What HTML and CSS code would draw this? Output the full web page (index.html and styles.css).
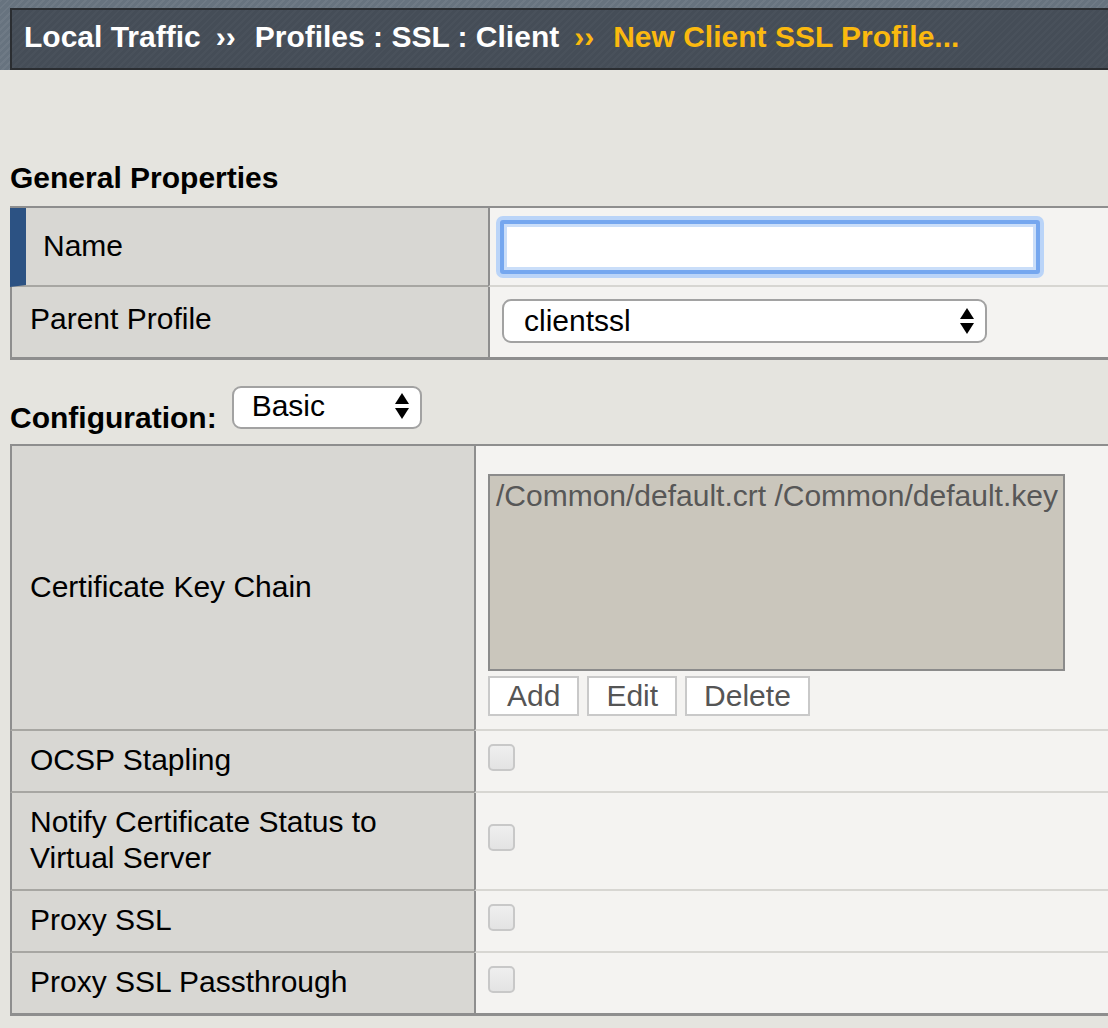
FILE: index.html
```html
<!DOCTYPE html>
<html lang="en">
<head>
<meta charset="utf-8">
<title>New Client SSL Profile</title>
<link rel="stylesheet" href="styles.css">
</head>
<body>
<div class="topbar">
  <div class="crumbs">
    <span class="crumb">Local Traffic</span><span class="sep">››</span><span class="crumb">Profiles : SSL : Client</span><span class="sep current">››</span><span class="crumb current">New Client SSL Profile...</span>
  </div>
</div>
<main class="page">
  <h2 class="section-title first">General Properties</h2>
  <div class="props props-general">
    <div class="label required"><span>Name</span></div>
    <div class="value"><input class="text-input" type="text" value=""></div>
    <div class="label last"><span>Parent Profile</span></div>
    <div class="value last">
      <div class="select select-parent"><span>clientssl</span>
        <svg class="arrows" width="14" height="26" viewBox="0 0 14 26"><polygon points="7,0 14,11 0,11" fill="#000"/><polygon points="0,15 14,15 7,26" fill="#000"/></svg>
      </div>
    </div>
  </div>

  <div class="config-head">
    <h2 class="section-title">Configuration:</h2>
    <div class="select select-config"><span>Basic</span>
      <svg class="arrows" width="14" height="26" viewBox="0 0 14 26"><polygon points="7,0 14,11 0,11" fill="#000"/><polygon points="0,15 14,15 7,26" fill="#000"/></svg>
    </div>
  </div>

  <div class="props props-config">
    <div class="label"><span>Certificate Key Chain</span></div>
    <div class="value value-chain">
      <div class="listbox">/Common/default.crt /Common/default.key</div>
      <div class="btn-row">
        <button class="btn" type="button">Add</button>
        <button class="btn" type="button">Edit</button>
        <button class="btn" type="button">Delete</button>
      </div>
    </div>

    <div class="label"><span>OCSP Stapling</span></div>
    <div class="value"><input class="check" type="checkbox"></div>

    <div class="label"><span>Notify Certificate Status to<br>Virtual Server</span></div>
    <div class="value"><input class="check" type="checkbox"></div>

    <div class="label"><span>Proxy SSL</span></div>
    <div class="value"><input class="check" type="checkbox"></div>

    <div class="label last"><span>Proxy SSL Passthrough</span></div>
    <div class="value last"><input class="check" type="checkbox"></div>
  </div>
</main>
</body>
</html>
```
FILE: styles.css
```css
html, body {
  margin: 0;
  padding: 0;
}

body {
  background: #e5e4df;
  font-family: "Liberation Sans", Arial, sans-serif;
  font-size: 30px;
  line-height: 36px;
  color: #000;
  overflow: hidden;
}

/* ---------- breadcrumb bar ---------- */
.topbar {
  background: #67737f repeating-linear-gradient(135deg, rgba(255,255,255,0.05) 0 2px, rgba(0,0,0,0) 2px 5px);
  padding: 8px 0 0 10px;
}

.crumbs {
  background: #454d57 repeating-linear-gradient(135deg, rgba(255,255,255,0.025) 0 2px, rgba(0,0,0,0) 2px 5px);
  border-top: 2px solid #2a2d31;
  border-bottom: 2px solid #2a2d31;
  border-left: 2px solid #2a2d31;
  line-height: 54px;
  padding: 0 0 4px 12px;
  font-weight: bold;
  color: #fff;
  white-space: nowrap;
}

.sep {
  margin: 0 19px 0 15px;
}

.current {
  color: #fbb90f;
}

/* ---------- page ---------- */
.page {
  padding-left: 10px;
}

.section-title {
  margin: 0;
  font-size: 30px;
  line-height: 36px;
  font-weight: bold;
}

.section-title.first {
  margin-top: 90px;
}

/* ---------- property tables ---------- */
.props {
  display: grid;
  border-top: 2px solid #8e8e8e;
  border-bottom: 3px solid #8e8e8e;
}

.props-general {
  grid-template-columns: 478px 1fr;
  margin-top: 10px;
}

.props-config {
  grid-template-columns: 464px 1fr;
  margin-top: 8px;
}

.label {
  box-sizing: border-box;
  display: flex;
  align-items: center;
  background: #d8d7d3;
  border-left: 2px solid #8e8e8e;
  border-bottom: 2px solid #a7a6a2;
  padding: 11px 10px 13px 18px;
}

.label.required {
  border-left: 16px solid #2c5283;
  padding: 20px 10px 21px 17px;
}

.props-general .label.last {
  padding-top: 14px;
  padding-bottom: 20px;
}

.value {
  display: flex;
  align-items: center;
  background: #f4f3f1;
  border-left: 2px solid #8e8e8e;
  border-bottom: 2px solid #d7d6d2;
  padding: 0 12px;
}

.label.last,
.value.last {
  border-bottom: none;
}

/* ---------- controls ---------- */
.text-input {
  box-sizing: border-box;
  width: 540px;
  height: 54px;
  margin: 0 0 0 -2px;
  border: 4px solid #75a7ef;
  border-radius: 3px;
  box-shadow: 0 0 0 4px #bad4f8, inset 0 0 0 3px #cadef9;
  background: #fff;
  outline: none;
  font: inherit;
  padding: 0 8px;
}

.select {
  box-sizing: border-box;
  display: flex;
  align-items: center;
  justify-content: space-between;
  background: #fff;
  border: 2px solid #a2a2a2;
  border-radius: 9px;
  padding: 0 11px 0 20px;
  color: #000;
}

.select-parent {
  width: 485px;
  height: 44px;
  margin-bottom: 3px;
}

.config-head {
  display: flex;
  align-items: flex-end;
  margin-top: 26px;
}

.select-config {
  width: 190px;
  height: 43px;
  margin: 0 0 7px 15px;
  padding-left: 18px;
  padding-bottom: 3px;
}

.arrows {
  display: block;
  flex: none;
}

.value-chain {
  display: block;
  padding: 12px 12px 13px;
}

.listbox {
  box-sizing: border-box;
  width: 577px;
  height: 197px;
  margin-top: 16px;
  border: 2px solid #8b8b8b;
  background: #cac6bc;
  color: #575757;
  padding: 2px 6px;
  white-space: nowrap;
}

.btn-row {
  display: flex;
  gap: 8px;
  margin-top: 5px;
}

.btn {
  box-sizing: border-box;
  height: 40px;
  border: 2px solid #c9c9c9;
  border-radius: 0;
  background: #fff;
  padding: 0 17px;
  font: inherit;
  line-height: 36px;
  color: #555;
}

.check {
  appearance: none;
  -webkit-appearance: none;
  box-sizing: border-box;
  width: 27px;
  height: 27px;
  margin: 0 0 7px 0;
  border: 2px solid #c8c8c8;
  border-radius: 5px;
  background: linear-gradient(#efefef, #e3e3e3);
}
```
